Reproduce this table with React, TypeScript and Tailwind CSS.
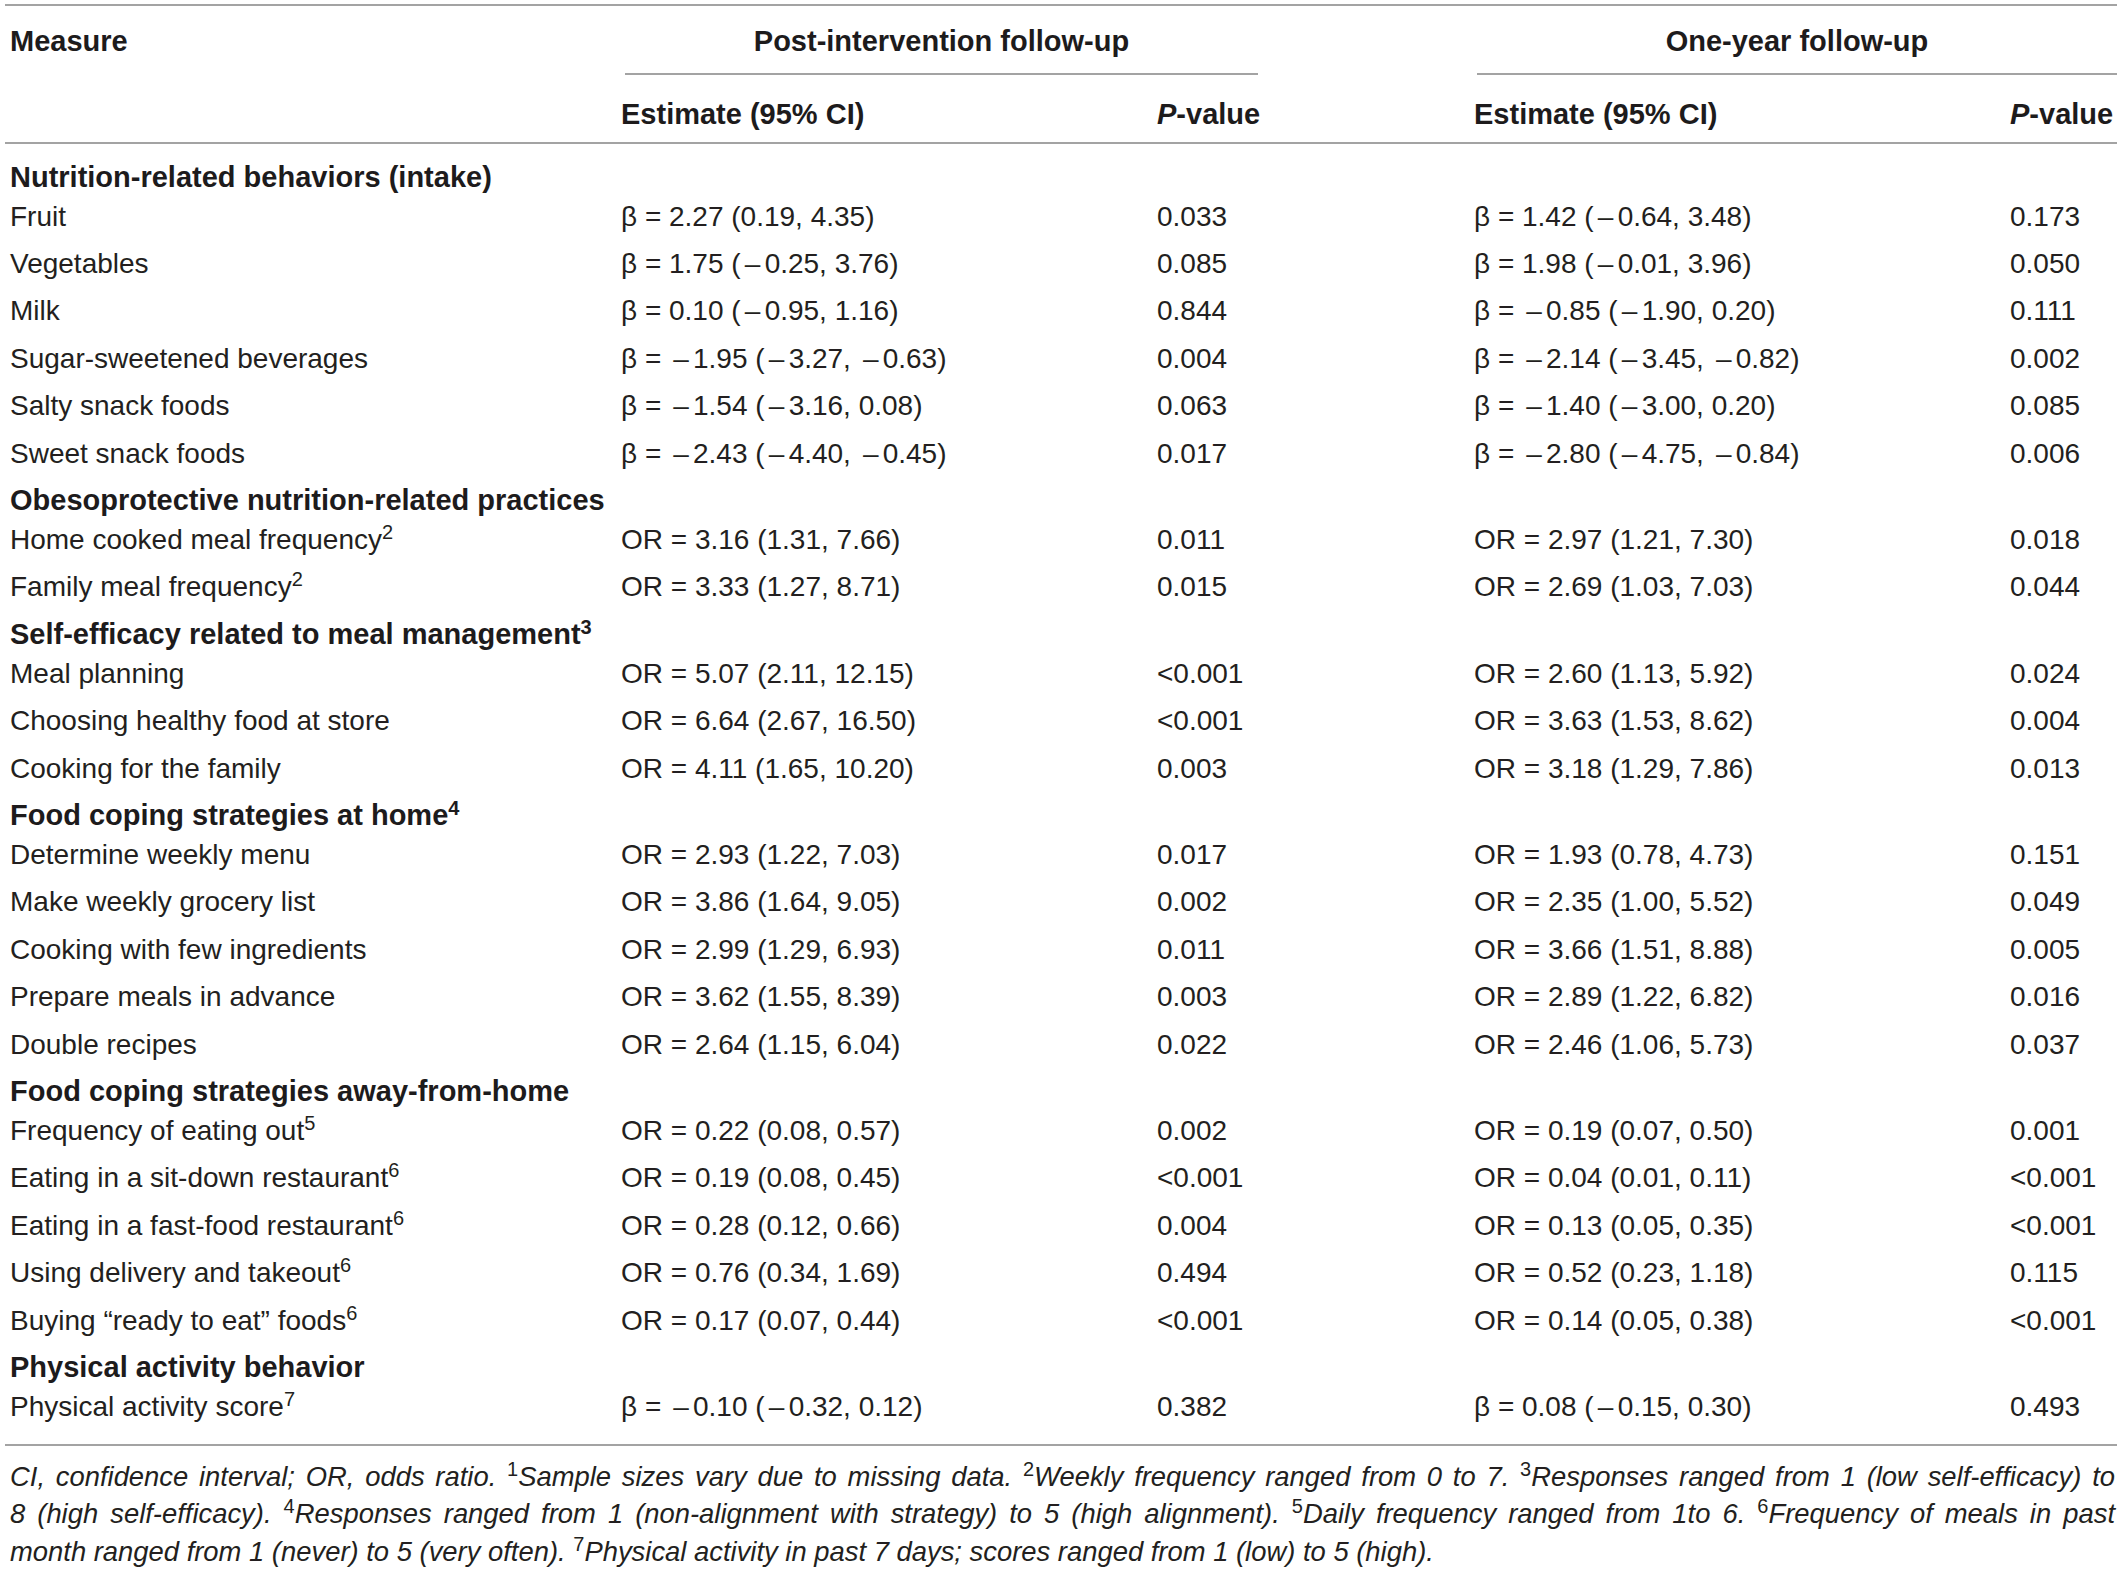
type Row = { label: string; sup?: string; e1: string; p1: string; e2: string; p2: string };
type Section = { title: string; sup?: string; rows: Row[] };

const sections: Section[] = [
  {
    title: "Nutrition-related behaviors (intake)",
    rows: [
      { label: "Fruit", e1: "β = 2.27 (0.19, 4.35)", p1: "0.033", e2: "β = 1.42 (–0.64, 3.48)", p2: "0.173" },
      { label: "Vegetables", e1: "β = 1.75 (–0.25, 3.76)", p1: "0.085", e2: "β = 1.98 (–0.01, 3.96)", p2: "0.050" },
      { label: "Milk", e1: "β = 0.10 (–0.95, 1.16)", p1: "0.844", e2: "β = –0.85 (–1.90, 0.20)", p2: "0.111" },
      { label: "Sugar-sweetened beverages", e1: "β = –1.95 (–3.27, –0.63)", p1: "0.004", e2: "β = –2.14 (–3.45, –0.82)", p2: "0.002" },
      { label: "Salty snack foods", e1: "β = –1.54 (–3.16, 0.08)", p1: "0.063", e2: "β = –1.40 (–3.00, 0.20)", p2: "0.085" },
      { label: "Sweet snack foods", e1: "β = –2.43 (–4.40, –0.45)", p1: "0.017", e2: "β = –2.80 (–4.75, –0.84)", p2: "0.006" },
    ],
  },
  {
    title: "Obesoprotective nutrition-related practices",
    rows: [
      { label: "Home cooked meal frequency", sup: "2", e1: "OR = 3.16 (1.31, 7.66)", p1: "0.011", e2: "OR = 2.97 (1.21, 7.30)", p2: "0.018" },
      { label: "Family meal frequency", sup: "2", e1: "OR = 3.33 (1.27, 8.71)", p1: "0.015", e2: "OR = 2.69 (1.03, 7.03)", p2: "0.044" },
    ],
  },
  {
    title: "Self-efficacy related to meal management",
    sup: "3",
    rows: [
      { label: "Meal planning", e1: "OR = 5.07 (2.11, 12.15)", p1: "<0.001", e2: "OR = 2.60 (1.13, 5.92)", p2: "0.024" },
      { label: "Choosing healthy food at store", e1: "OR = 6.64 (2.67, 16.50)", p1: "<0.001", e2: "OR = 3.63 (1.53, 8.62)", p2: "0.004" },
      { label: "Cooking for the family", e1: "OR = 4.11 (1.65, 10.20)", p1: "0.003", e2: "OR = 3.18 (1.29, 7.86)", p2: "0.013" },
    ],
  },
  {
    title: "Food coping strategies at home",
    sup: "4",
    rows: [
      { label: "Determine weekly menu", e1: "OR = 2.93 (1.22, 7.03)", p1: "0.017", e2: "OR = 1.93 (0.78, 4.73)", p2: "0.151" },
      { label: "Make weekly grocery list", e1: "OR = 3.86 (1.64, 9.05)", p1: "0.002", e2: "OR = 2.35 (1.00, 5.52)", p2: "0.049" },
      { label: "Cooking with few ingredients", e1: "OR = 2.99 (1.29, 6.93)", p1: "0.011", e2: "OR = 3.66 (1.51, 8.88)", p2: "0.005" },
      { label: "Prepare meals in advance", e1: "OR = 3.62 (1.55, 8.39)", p1: "0.003", e2: "OR = 2.89 (1.22, 6.82)", p2: "0.016" },
      { label: "Double recipes", e1: "OR = 2.64 (1.15, 6.04)", p1: "0.022", e2: "OR = 2.46 (1.06, 5.73)", p2: "0.037" },
    ],
  },
  {
    title: "Food coping strategies away-from-home",
    rows: [
      { label: "Frequency of eating out", sup: "5", e1: "OR = 0.22 (0.08, 0.57)", p1: "0.002", e2: "OR = 0.19 (0.07, 0.50)", p2: "0.001" },
      { label: "Eating in a sit-down restaurant", sup: "6", e1: "OR = 0.19 (0.08, 0.45)", p1: "<0.001", e2: "OR = 0.04 (0.01, 0.11)", p2: "<0.001" },
      { label: "Eating in a fast-food restaurant", sup: "6", e1: "OR = 0.28 (0.12, 0.66)", p1: "0.004", e2: "OR = 0.13 (0.05, 0.35)", p2: "<0.001" },
      { label: "Using delivery and takeout", sup: "6", e1: "OR = 0.76 (0.34, 1.69)", p1: "0.494", e2: "OR = 0.52 (0.23, 1.18)", p2: "0.115" },
      { label: "Buying “ready to eat” foods", sup: "6", e1: "OR = 0.17 (0.07, 0.44)", p1: "<0.001", e2: "OR = 0.14 (0.05, 0.38)", p2: "<0.001" },
    ],
  },
  {
    title: "Physical activity behavior",
    rows: [
      { label: "Physical activity score", sup: "7", e1: "β = –0.10 (–0.32, 0.12)", p1: "0.382", e2: "β = 0.08 (–0.15, 0.30)", p2: "0.493" },
    ],
  },
];

const cols = "grid grid-cols-[616px_536px_317px_536px_107px]";

function Sup({ n }: { n: string }) {
  return <sup className="text-[20px] not-italic">{n}</sup>;
}

// the source typesets minus signs a little wider than an en dash
function Val({ text }: { text: string }) {
  const parts = text.split("–");
  return (
    <>
      {parts.map((p, i) => (
        <span key={i}>
          {i > 0 && <span className="inline-block w-[24px] text-center">–</span>}
          {p}
        </span>
      ))}
    </>
  );
}

export default function App() {
  return (
    <div className="min-h-screen bg-white font-['Liberation_Sans',Arial,sans-serif] text-[#231f20]">
      <div className="ml-[5px] w-[2112px] pt-[4px]">
        {/* header */}
        <div className="border-t-2 border-b-2 border-[#a3a3a3] text-[29px] font-bold leading-[36px] text-[#1d1b1c]">
          <div className={cols}>
            <div className="pl-[5px] pt-[17px]">Measure</div>
            <div className="col-span-2 pl-[4px]">
              <div className="w-[633px] border-b-2 border-[#a3a3a3] pt-[17px] pb-[14px] text-center">
                Post-intervention follow-up
              </div>
            </div>
            <div className="col-span-2 pl-[3px]">
              <div className="border-b-2 border-[#a3a3a3] pt-[17px] pb-[14px] text-center">One-year follow-up</div>
            </div>
          </div>
          <div className={`${cols} pt-[21px] pb-[10px]`}>
            <div />
            <div>Estimate (95% CI)</div>
            <div>
              <span className="italic">P</span>-value
            </div>
            <div>Estimate (95% CI)</div>
            <div>
              <span className="italic">P</span>-value
            </div>
          </div>
        </div>

        {/* body */}
        <div className="border-b-2 border-[#a3a3a3] pt-[10px] pb-[13px] text-[28px]">
          {sections.map((s) => (
            <div key={s.title}>
              <div className="h-[39px] pl-[5px] pt-[7px] text-[29px] font-bold leading-[32px] text-[#1d1b1c]">
                {s.title}
                {s.sup && <sup className="text-[20px]">{s.sup}</sup>}
              </div>
              {s.rows.map((r) => (
                <div key={r.label} className={`${cols} h-[47.4px] items-center leading-[34px]`}>
                  <div className="pl-[5px]">
                    {r.label}
                    {r.sup && <Sup n={r.sup} />}
                  </div>
                  <div>
                    <Val text={r.e1} />
                  </div>
                  <div>{r.p1}</div>
                  <div>
                    <Val text={r.e2} />
                  </div>
                  <div>{r.p2}</div>
                </div>
              ))}
            </div>
          ))}
        </div>

        {/* footnote */}
        <div className="pl-[5px] pr-[2px] pt-[12px] text-[27.4px] italic leading-[37.5px]">
          <div className="text-justify [text-align-last:justify]">
            CI, confidence interval; OR, odds ratio. <Sup n="1" />Sample sizes vary due to missing data. <Sup n="2" />Weekly
            frequency ranged from 0 to 7. <Sup n="3" />Responses ranged from 1 (low self-efficacy) to
          </div>
          <div className="text-justify [text-align-last:justify]">
            8 (high self-efficacy). <Sup n="4" />Responses ranged from 1 (non-alignment with strategy) to 5 (high alignment).{" "}
            <Sup n="5" />Daily frequency ranged from 1to 6. <Sup n="6" />Frequency of meals in past
          </div>
          <div>
            month ranged from 1 (never) to 5 (very often). <Sup n="7" />Physical activity in past 7 days; scores ranged from 1
            (low) to 5 (high).
          </div>
        </div>
      </div>
    </div>
  );
}
